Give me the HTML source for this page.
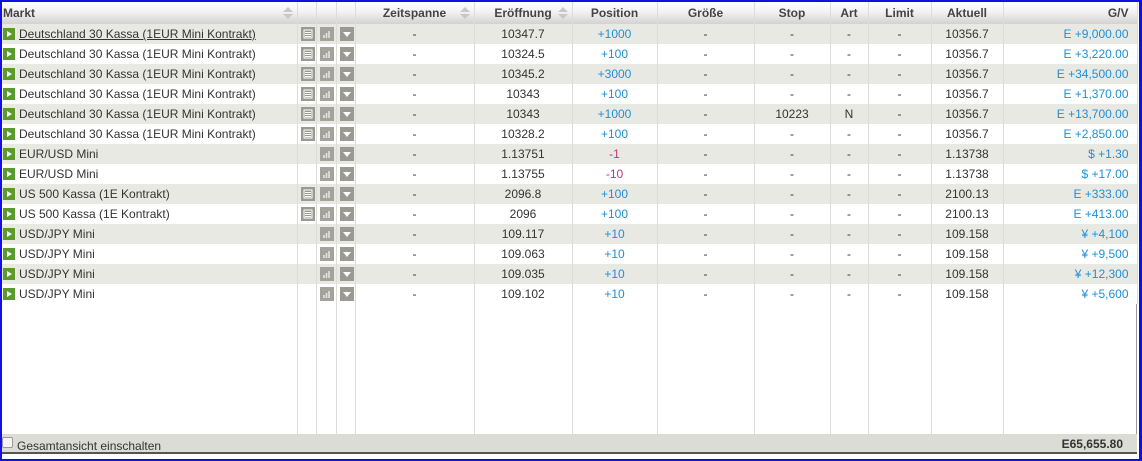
<!DOCTYPE html>
<html><head><meta charset="utf-8"><style>
*{margin:0;padding:0;box-sizing:border-box}
body{width:1142px;height:461px;overflow:hidden;background:#fff;font-family:"Liberation Sans",Arial,sans-serif;font-size:12px;color:#333;position:relative}
.frame{position:absolute;left:0;top:0;width:1142px;height:461px;border:2px solid #1010e0;border-right-width:3px}
table{position:absolute;left:2px;top:2px;border-collapse:collapse;table-layout:fixed;width:1135px}
td,th{height:20px;border-right:1px solid #dcdcd8;white-space:nowrap;overflow:hidden;padding:0 3px;text-align:center}
th{height:22px;font-weight:bold;color:#444;font-size:12px;background:linear-gradient(#fff 0%,#f2f2f2 45%,#d2d2d2 100%);position:relative}
tr.g td{background:#e9e9e4}
td.l{text-align:left;padding-left:17px;position:relative}
td.r{text-align:right;padding-right:8px}
.b{color:#1e90d8}.m{color:#c8307e}
.pl{position:absolute;left:1px;top:4px;width:12px;height:12px;background:#5b9a2c}
.pl:after{content:"";position:absolute;left:4px;top:3px;border-left:5px solid #fff;border-top:3px solid transparent;border-bottom:3px solid transparent}
svg{display:inline-block;vertical-align:middle}
.sort{position:absolute;right:4px;top:5px;width:10px;height:13px}
.sort:before{content:"";position:absolute;left:0;top:0;border-bottom:5px solid #c8c8c8;border-left:5px solid transparent;border-right:5px solid transparent}
.sort:after{content:"";position:absolute;left:0;top:7px;border-top:5px solid #c8c8c8;border-left:5px solid transparent;border-right:5px solid transparent}
.foot{position:absolute;left:2px;top:434px;width:1135px;height:20px;background:#dcdcd6;border-bottom:2px solid #555;font-size:12px}
.foot .cb{position:absolute;left:0;top:3px;width:11px;height:11px;border:1px solid #999;border-radius:2px;background:#f4f4f4}
.foot .t{position:absolute;left:15px;top:5px;color:#333}
.foot .s{position:absolute;right:14px;top:3px;font-weight:bold;color:#333}
.vl{position:absolute;top:304px;height:130px;width:1px;background:#dcdcd8}
</style></head><body>
<svg width="0" height="0" style="position:absolute"><defs>
<symbol id="doc" viewBox="0 0 14 14"><rect width="14" height="14" fill="#9a9a92"/><rect x="3" y="3" width="8" height="8" fill="none" stroke="#fff"/><path d="M4 5.5h6M4 7.5h6M4 9.5h6" stroke="#fff"/></symbol>
<symbol id="ch" viewBox="0 0 14 14"><rect width="14" height="14" fill="#a3a39b"/><path d="M4 11V8M6.5 11V6M9 11V4" stroke="#e4e4e0" stroke-width="1.6"/></symbol>
<symbol id="dd" viewBox="0 0 14 14"><rect width="14" height="14" fill="#9a9a92"/><path d="M3 5h8l-4 5z" fill="#fff"/></symbol>
</defs></svg>
<table>
<colgroup><col style="width:295px"><col style="width:19px"><col style="width:20px"><col style="width:19px"><col style="width:119px"><col style="width:98px"><col style="width:85px"><col style="width:97px"><col style="width:76px"><col style="width:38px"><col style="width:63px"><col style="width:72px"><col style="width:134px"></colgroup>
<tr><th style="text-align:left;padding-left:1px">Markt<span class="sort"></span></th><th></th><th></th><th></th><th>Zeitspanne<span class="sort"></span></th><th>Eröffnung<span class="sort"></span></th><th>Position</th><th>Größe</th><th>Stop</th><th>Art</th><th>Limit</th><th>Aktuell</th><th style="text-align:right;padding-right:8px">G/V</th></tr>
<tr class="g"><td class="l"><span class="pl"></span><u>Deutschland 30 Kassa (1EUR Mini Kontrakt)</u></td><td><svg width="14" height="14"><use href="#doc"/></svg></td><td><svg width="14" height="14"><use href="#ch"/></svg></td><td><svg width="14" height="14"><use href="#dd"/></svg></td><td>-</td><td>10347.7</td><td class="b">+1000</td><td>-</td><td>-</td><td>-</td><td>-</td><td>10356.7</td><td class="r b">E +9,000.00</td></tr>
<tr><td class="l"><span class="pl"></span>Deutschland 30 Kassa (1EUR Mini Kontrakt)</td><td><svg width="14" height="14"><use href="#doc"/></svg></td><td><svg width="14" height="14"><use href="#ch"/></svg></td><td><svg width="14" height="14"><use href="#dd"/></svg></td><td>-</td><td>10324.5</td><td class="b">+100</td><td>-</td><td>-</td><td>-</td><td>-</td><td>10356.7</td><td class="r b">E +3,220.00</td></tr>
<tr class="g"><td class="l"><span class="pl"></span>Deutschland 30 Kassa (1EUR Mini Kontrakt)</td><td><svg width="14" height="14"><use href="#doc"/></svg></td><td><svg width="14" height="14"><use href="#ch"/></svg></td><td><svg width="14" height="14"><use href="#dd"/></svg></td><td>-</td><td>10345.2</td><td class="b">+3000</td><td>-</td><td>-</td><td>-</td><td>-</td><td>10356.7</td><td class="r b">E +34,500.00</td></tr>
<tr><td class="l"><span class="pl"></span>Deutschland 30 Kassa (1EUR Mini Kontrakt)</td><td><svg width="14" height="14"><use href="#doc"/></svg></td><td><svg width="14" height="14"><use href="#ch"/></svg></td><td><svg width="14" height="14"><use href="#dd"/></svg></td><td>-</td><td>10343</td><td class="b">+100</td><td>-</td><td>-</td><td>-</td><td>-</td><td>10356.7</td><td class="r b">E +1,370.00</td></tr>
<tr class="g"><td class="l"><span class="pl"></span>Deutschland 30 Kassa (1EUR Mini Kontrakt)</td><td><svg width="14" height="14"><use href="#doc"/></svg></td><td><svg width="14" height="14"><use href="#ch"/></svg></td><td><svg width="14" height="14"><use href="#dd"/></svg></td><td>-</td><td>10343</td><td class="b">+1000</td><td>-</td><td>10223</td><td>N</td><td>-</td><td>10356.7</td><td class="r b">E +13,700.00</td></tr>
<tr><td class="l"><span class="pl"></span>Deutschland 30 Kassa (1EUR Mini Kontrakt)</td><td><svg width="14" height="14"><use href="#doc"/></svg></td><td><svg width="14" height="14"><use href="#ch"/></svg></td><td><svg width="14" height="14"><use href="#dd"/></svg></td><td>-</td><td>10328.2</td><td class="b">+100</td><td>-</td><td>-</td><td>-</td><td>-</td><td>10356.7</td><td class="r b">E +2,850.00</td></tr>
<tr class="g"><td class="l"><span class="pl"></span>EUR/USD Mini</td><td></td><td><svg width="14" height="14"><use href="#ch"/></svg></td><td><svg width="14" height="14"><use href="#dd"/></svg></td><td>-</td><td>1.13751</td><td class="m">-1</td><td>-</td><td>-</td><td>-</td><td>-</td><td>1.13738</td><td class="r b">$ +1.30</td></tr>
<tr><td class="l"><span class="pl"></span>EUR/USD Mini</td><td></td><td><svg width="14" height="14"><use href="#ch"/></svg></td><td><svg width="14" height="14"><use href="#dd"/></svg></td><td>-</td><td>1.13755</td><td class="m">-10</td><td>-</td><td>-</td><td>-</td><td>-</td><td>1.13738</td><td class="r b">$ +17.00</td></tr>
<tr class="g"><td class="l"><span class="pl"></span>US 500 Kassa (1E Kontrakt)</td><td><svg width="14" height="14"><use href="#doc"/></svg></td><td><svg width="14" height="14"><use href="#ch"/></svg></td><td><svg width="14" height="14"><use href="#dd"/></svg></td><td>-</td><td>2096.8</td><td class="b">+100</td><td>-</td><td>-</td><td>-</td><td>-</td><td>2100.13</td><td class="r b">E +333.00</td></tr>
<tr><td class="l"><span class="pl"></span>US 500 Kassa (1E Kontrakt)</td><td><svg width="14" height="14"><use href="#doc"/></svg></td><td><svg width="14" height="14"><use href="#ch"/></svg></td><td><svg width="14" height="14"><use href="#dd"/></svg></td><td>-</td><td>2096</td><td class="b">+100</td><td>-</td><td>-</td><td>-</td><td>-</td><td>2100.13</td><td class="r b">E +413.00</td></tr>
<tr class="g"><td class="l"><span class="pl"></span>USD/JPY Mini</td><td></td><td><svg width="14" height="14"><use href="#ch"/></svg></td><td><svg width="14" height="14"><use href="#dd"/></svg></td><td>-</td><td>109.117</td><td class="b">+10</td><td>-</td><td>-</td><td>-</td><td>-</td><td>109.158</td><td class="r b">¥ +4,100</td></tr>
<tr><td class="l"><span class="pl"></span>USD/JPY Mini</td><td></td><td><svg width="14" height="14"><use href="#ch"/></svg></td><td><svg width="14" height="14"><use href="#dd"/></svg></td><td>-</td><td>109.063</td><td class="b">+10</td><td>-</td><td>-</td><td>-</td><td>-</td><td>109.158</td><td class="r b">¥ +9,500</td></tr>
<tr class="g"><td class="l"><span class="pl"></span>USD/JPY Mini</td><td></td><td><svg width="14" height="14"><use href="#ch"/></svg></td><td><svg width="14" height="14"><use href="#dd"/></svg></td><td>-</td><td>109.035</td><td class="b">+10</td><td>-</td><td>-</td><td>-</td><td>-</td><td>109.158</td><td class="r b">¥ +12,300</td></tr>
<tr><td class="l"><span class="pl"></span>USD/JPY Mini</td><td></td><td><svg width="14" height="14"><use href="#ch"/></svg></td><td><svg width="14" height="14"><use href="#dd"/></svg></td><td>-</td><td>109.102</td><td class="b">+10</td><td>-</td><td>-</td><td>-</td><td>-</td><td>109.158</td><td class="r b">¥ +5,600</td></tr>
</table>
<div class="vl" style="left:297px"></div><div class="vl" style="left:316px"></div><div class="vl" style="left:336px"></div><div class="vl" style="left:355px"></div><div class="vl" style="left:474px"></div><div class="vl" style="left:572px"></div><div class="vl" style="left:657px"></div><div class="vl" style="left:754px"></div><div class="vl" style="left:830px"></div><div class="vl" style="left:868px"></div><div class="vl" style="left:931px"></div><div class="vl" style="left:1003px"></div><div class="vl" style="left:1136px;background:#999"></div>
<div class="foot"><span class="cb"></span><span class="t">Gesamtansicht einschalten</span><span class="s">E65,655.80</span></div>
<div class="frame"></div>
</body></html>
